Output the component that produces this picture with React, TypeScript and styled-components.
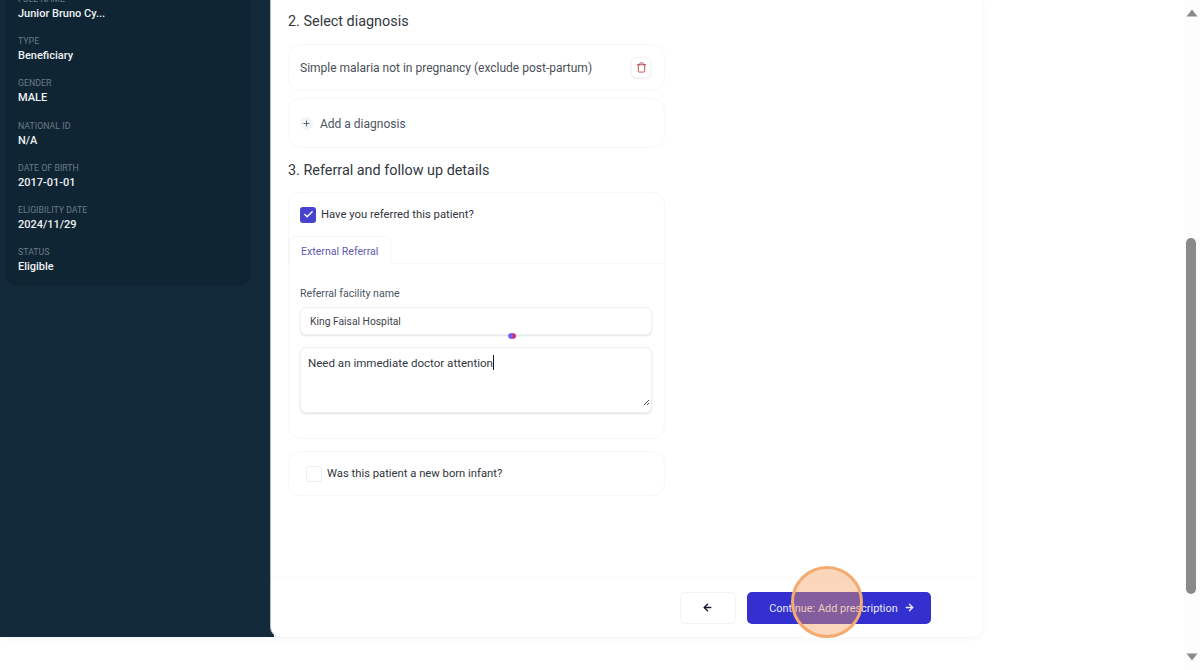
import { ArrowLeft, ArrowRight, Check, Plus, Trash } from "lucide-react"
import styled, { createGlobalStyle } from "styled-components"

const GlobalStyle = createGlobalStyle`
	html, body {
		margin: 0;
		padding: 0;
		height: 670px;
		overflow: hidden;
		background: #fff;
		font-family: Roboto, "Noto Sans", sans-serif;
	}
	* {
		box-sizing: border-box;
	}
`

const Page = styled.div`
	display: flex;
	height: 670px;
	position: relative;
`

const Content = styled.div`
	flex: 1;
	min-width: 0;
`

const Shell = styled.div`
	display: flex;
	height: 637px;
	width: 982px;
	overflow: hidden;
	background: linear-gradient(to right, #132a3b 274px, #fff 274px);
	border-bottom-right-radius: 10px;
	box-shadow: 0 1px 6px rgba(15, 23, 42, 0.05);
`

const Sidebar = styled.aside`
	width: 270px;
	flex-shrink: 0;
	padding-right: 19px;
	padding-left: 5px;
`

const InfoCard = styled.div`
	height: 294px;
	padding: 0 13px;
	margin-top: -8.4px;
	background: #102533;
	border-radius: 0 0 12px 12px;
	overflow: hidden;
`

const InfoItem = styled.div`
	height: 42.3px;
	padding-top: 1px;
`

const InfoLabel = styled.div`
	font-size: 8.8px;
	line-height: 12px;
	color: #6a7a86;
	text-transform: uppercase;
`

const InfoValue = styled.div`
	font-size: 11px;
	font-weight: 500;
	line-height: 17px;
	color: #eef2f5;
`

const Panel = styled.main`
	flex: 1;
	display: flex;
	flex-direction: column;
	background: #fff;
	border-left: 1px solid #aebcc7;
	border-radius: 0 0 10px 10px;
`

const Form = styled.div`
	flex: 1;
	padding: 13px 0 0 17px;
`

const SectionTitle = styled.h2<{ $gap: number }>`
	margin: 0 0 ${(p) => p.$gap}px;
	height: 18px;
	font-size: 14.4px;
	font-weight: 400;
	line-height: 18px;
	color: #33383f;
`

const Card = styled.section<{ $height: number; $gap?: number }>`
	position: relative;
	width: 377px;
	height: ${(p) => p.$height}px;
	margin-bottom: ${(p) => p.$gap ?? 0}px;
	padding: 0 13px 0 11px;
	display: flex;
	align-items: center;
	background: #fff;
	border: 1px solid #f6f7f8;
	border-radius: 13px;
`

const DiagnosisName = styled.span`
	flex: 1;
	font-size: 12px;
	color: #4a4f57;
`

const IconButton = styled.button`
	width: 20px;
	height: 21px;
	padding: 0;
	display: flex;
	align-items: center;
	justify-content: center;
	background: #fff;
	border: 1px solid #f3f4f5;
	border-radius: 5px;
	box-shadow: 0 1px 2px rgba(15, 23, 42, 0.07);
	color: #b5343a;
`

const AddBadge = styled.span`
	width: 13px;
	height: 13px;
	margin-right: 7px;
	display: flex;
	align-items: center;
	justify-content: center;
	background: #f3f4f6;
	border-radius: 50%;
	color: #374151;
`

const AddText = styled.span`
	font-size: 12px;
	line-height: 16px;
	padding-top: 1px;
	color: #4b5563;
`

const SectionGap = styled.div`
	height: 14px;
`

const ReferralCard = styled(Card)`
	display: block;
	padding: 0;
	margin-bottom: 12px;
`

const CheckRow = styled.label`
	display: flex;
	align-items: center;
	gap: 5px;
	padding: 0 11px;
	height: 43px;
	font-size: 11.3px;
	color: #30353c;
`

const CheckedBox = styled.span`
	width: 16px;
	height: 16px;
	display: flex;
	align-items: center;
	justify-content: center;
	background: #4743cf;
	border-radius: 3px;
	color: #fff;
`

const Tabs = styled.div`
	height: 28px;
	border-bottom: 1px solid #f6f7f8;
`

const Tab = styled.div`
	width: 102px;
	height: 28px;
	padding: 8px 0 0 11px;
	font-size: 10.6px;
	line-height: 14px;
	color: #5f5bb0;
	background: #fff;
	border: 1px solid #f6f7f8;
	border-bottom: none;
	border-radius: 6px 6px 0 0;
`

const Fields = styled.div`
	padding: 23px 12px 0 11px;
`

const FieldLabel = styled.div`
	font-size: 10.6px;
	line-height: 14px;
	margin-bottom: 6px;
	color: #4b5563;
`

const TextField = styled.div`
	height: 28px;
	padding: 0 9px;
	display: flex;
	align-items: center;
	font-size: 10.3px;
	color: #3f444c;
	background: #fff;
	border: 1px solid #eef0f2;
	border-radius: 6px;
	box-shadow: 0 1px 2px rgba(15, 23, 42, 0.12);
`

const TextAreaField = styled.div`
	position: relative;
	height: 66px;
	margin-top: 12px;
	padding: 6px 7px;
	font-size: 11.55px;
	line-height: 18px;
	color: #33383f;
	background: #fff;
	border: 1px solid #eef0f2;
	border-radius: 6px;
	box-shadow: 0 1px 2px rgba(15, 23, 42, 0.14);
`

const Caret = styled.span`
	display: inline-block;
	width: 1px;
	height: 15px;
	vertical-align: -3px;
	background: #111827;
`

const ResizeGrip = styled.svg`
	position: absolute;
	right: 1px;
	bottom: 6px;
`

const EmptyBox = styled.span`
	width: 16px;
	height: 16px;
	margin: 0 5px 0 6px;
	background: #fff;
	border: 1px solid #eceef1;
	border-radius: 3px;
`

const InfantText = styled.span`
	font-size: 11.25px;
	color: #30353c;
`

const Footer = styled.footer`
	height: 60px;
	padding: 14px 51px 0 0;
	display: flex;
	justify-content: flex-end;
	gap: 11px;
	border-top: 1px solid #fbfbfc;
`

const BackButton = styled.button`
	width: 56px;
	height: 32px;
	padding: 0 2px 2px 0;
	display: flex;
	align-items: center;
	justify-content: center;
	background: #fff;
	border: 1px solid #f3f4f5;
	border-radius: 5px;
	color: #111827;
`

const ContinueButton = styled.button`
	width: 184px;
	height: 32px;
	padding: 0 0 0 6px;
	display: flex;
	align-items: center;
	justify-content: center;
	gap: 6px;
	font-family: inherit;
	font-size: 10.9px;
	color: #e8e8fb;
	background: #3330cf;
	border: none;
	border-radius: 5px;

	svg {
		margin-top: -2px;
	}
`

const ScrollTrack = styled.div`
	width: 16px;
	height: 670px;
	display: flex;
	flex-direction: column;
	align-items: center;
	justify-content: space-between;
	position: relative;
	padding: 9px 1px 9px 0;
	background: #fdfdfd;
`

const ScrollThumb = styled.div`
	position: absolute;
	left: 2px;
	top: 238px;
	width: 10px;
	height: 356px;
	background: #8a8a8a;
	border-radius: 5px;
`

const ClickHalo = styled.div`
	position: absolute;
	left: 791px;
	top: 566px;
	width: 72px;
	height: 72px;
	border-radius: 50%;
	background: rgba(245, 158, 90, 0.42);
	border: 3px solid #f3ab6f;
`

const CursorDot = styled.div`
	position: absolute;
	left: 508px;
	top: 333px;
	width: 8px;
	height: 6px;
	border-radius: 50%;
	background: linear-gradient(to right, #7a5cf0 65%, #d92a4a 65%);
`

const info = [
	{ label: "Full name", value: "Junior Bruno Cy..." },
	{ label: "Type", value: "Beneficiary" },
	{ label: "Gender", value: "MALE" },
	{ label: "National ID", value: "N/A" },
	{ label: "Date of birth", value: "2017-01-01" },
	{ label: "Eligibility date", value: "2024/11/29" },
	{ label: "Status", value: "Eligible" }
]

export default function App() {
	return (
		<Page>
			<GlobalStyle />
			<Content>
				<Shell>
					<Sidebar>
						<InfoCard>
							{info.map((item) => (
								<InfoItem key={item.label}>
									<InfoLabel>{item.label}</InfoLabel>
									<InfoValue>{item.value}</InfoValue>
								</InfoItem>
							))}
						</InfoCard>
					</Sidebar>
					<Panel>
						<Form>
							<SectionTitle $gap={13}>2. Select diagnosis</SectionTitle>
							<Card $height={47} $gap={7}>
								<DiagnosisName>
									Simple malaria not in pregnancy (exclude post-partum)
								</DiagnosisName>
								<IconButton aria-label="Remove diagnosis">
									<Trash size={11} strokeWidth={1.8} />
								</IconButton>
							</Card>
							<Card $height={50}>
								<AddBadge>
									<Plus size={9} strokeWidth={2} />
								</AddBadge>
								<AddText>Add a diagnosis</AddText>
							</Card>
							<SectionGap />
							<SectionTitle $gap={12}>
								3. Referral and follow up details
							</SectionTitle>
							<ReferralCard $height={247}>
								<CheckRow>
									<CheckedBox>
										<Check size={11} strokeWidth={3} />
									</CheckedBox>
									Have you referred this patient?
								</CheckRow>
								<Tabs>
									<Tab>External Referral</Tab>
								</Tabs>
								<Fields>
									<FieldLabel>Referral facility name</FieldLabel>
									<TextField>King Faisal Hospital</TextField>
									<TextAreaField>
										Need an immediate doctor attention
										<Caret />
										<ResizeGrip width="7" height="7" viewBox="0 0 7 7">
											<path d="M1 6 6 1M4 6 6 4" stroke="#444" strokeWidth="1" />
										</ResizeGrip>
									</TextAreaField>
								</Fields>
							</ReferralCard>
							<Card $height={45}>
								<EmptyBox />
								<InfantText>Was this patient a new born infant?</InfantText>
							</Card>
						</Form>
						<Footer>
							<BackButton aria-label="Back">
								<ArrowLeft size={11} strokeWidth={3} />
							</BackButton>
							<ContinueButton>
								Continue: Add prescription
								<ArrowRight size={11} strokeWidth={3} />
							</ContinueButton>
						</Footer>
					</Panel>
				</Shell>
			</Content>
			<ScrollTrack>
				<svg width="12" height="8" viewBox="0 0 12 8">
					<path d="M6 0.5 11.5 7.5H0.5Z" fill="#8a8a8a" />
				</svg>
				<ScrollThumb />
				<svg width="12" height="8" viewBox="0 0 12 8">
					<path d="M6 7.5 11.5 0.5H0.5Z" fill="#8a8a8a" />
				</svg>
			</ScrollTrack>
			<CursorDot />
			<ClickHalo />
		</Page>
	)
}
